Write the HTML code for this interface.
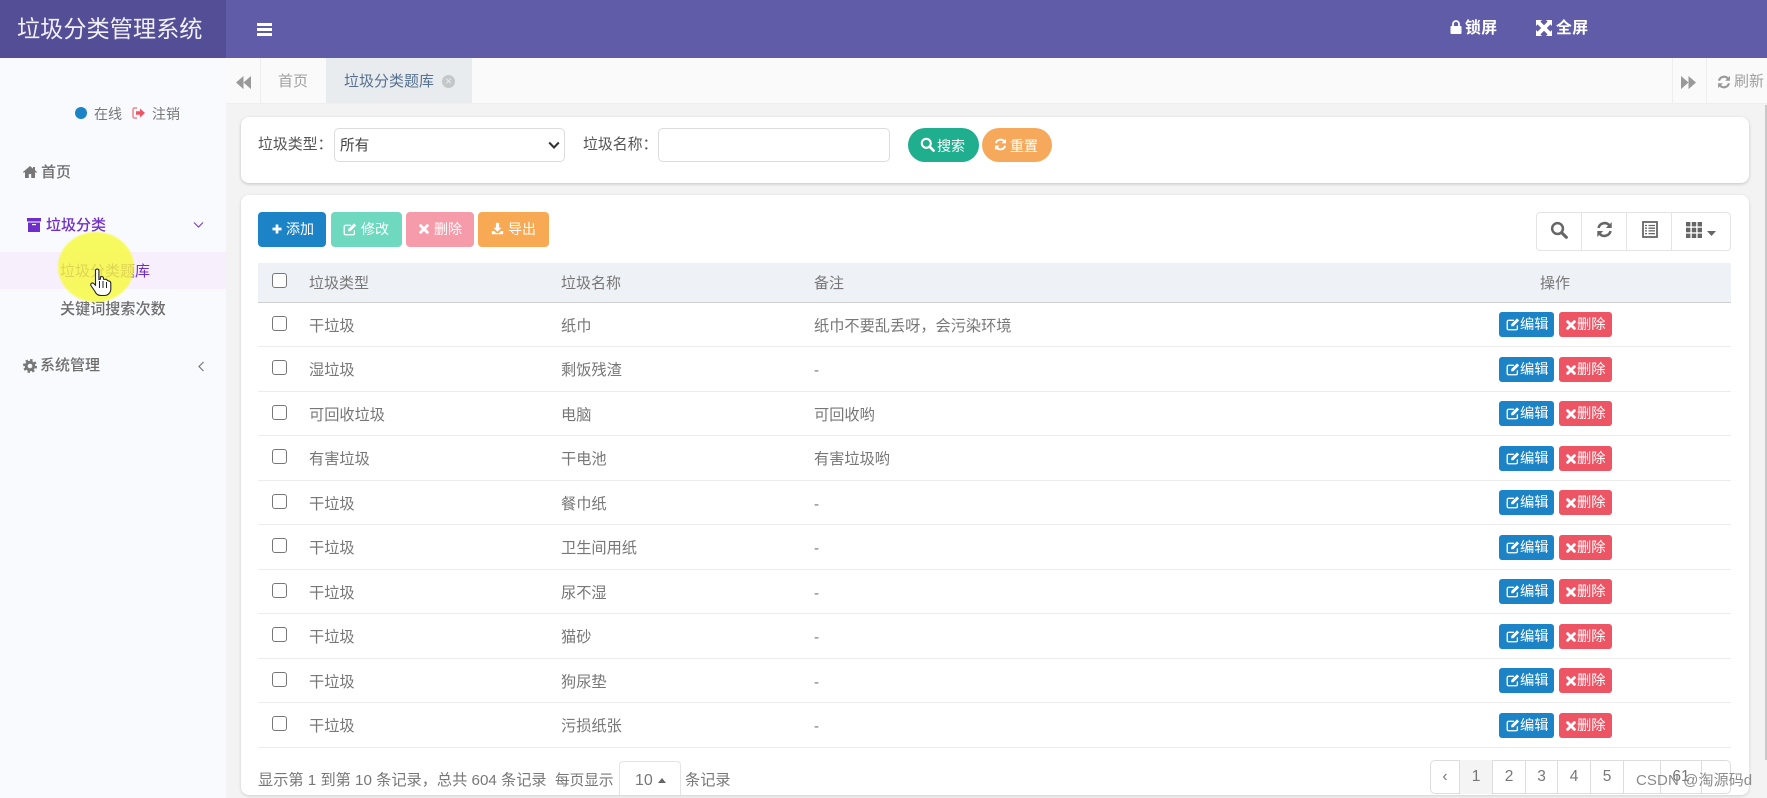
<!DOCTYPE html>
<html lang="zh"><head><meta charset="utf-8"><title>垃圾分类管理系统</title>
<style>
*{box-sizing:border-box}
html,body{margin:0;padding:0}
body{width:1767px;height:798px;overflow:hidden;position:relative;background:#f3f3f4;font-family:"Liberation Sans","Noto Sans CJK SC",sans-serif;font-size:14.65px;color:#777;filter:blur(.35px)}
.a{position:absolute;white-space:nowrap}
svg{position:absolute;display:block}
.t{line-height:20px;height:20px}
.btn{position:absolute;border-radius:4px;color:#fff;line-height:35px;height:35px;top:212px;font-size:14px}
.row{position:absolute;left:258px;width:1473px;height:44.5px;border-bottom:1px solid #ececec;line-height:47px;color:#777;font-size:15.2px}
.row span{position:absolute;top:0}
.row .c1{left:51px}.row .c2{left:303px}.row .c3{left:556px}
.row i{position:absolute;left:14px;top:13px;width:15px;height:15px;border:1px solid #777;border-radius:3px;background:#fff}
.row b{position:absolute;top:9.500px;height:25px;border-radius:3px;color:#fff;font-weight:400;font-size:14.300px;line-height:27px;text-align:left}
.row .e{left:1241px;width:55px;background:#1c84c6;padding-left:21px}
.row .d{left:1301px;width:53px;background:#ed5565;padding-left:18px}
.pg{position:absolute;top:760px;height:34px;border-right:1px solid #ddd;line-height:34px;text-align:center;color:#777;font-size:15.500px}
</style></head><body>
<svg width="0" height="0" style="position:absolute"><defs>
<symbol id="edit" viewBox="0 0 16 16"><path d="M13 9.500V13a1.600 1.600 0 0 1-1.600 1.600H3A1.600 1.600 0 0 1 1.400 13V5.400A1.600 1.600 0 0 1 3 3.800h6" fill="none" stroke="currentColor" stroke-width="1.500"/><path d="M6 8.200 12.600 1.600l2.400 2.400-6.600 6.600H6z" fill="currentColor"/></symbol>
<symbol id="x" viewBox="0 0 16 16"><path d="M3.500 3.500l9 9M12.500 3.500l-9 9" stroke="currentColor" stroke-width="3.800" stroke-linecap="round" fill="none"/></symbol>
<symbol id="plus" viewBox="0 0 16 16"><path d="M8 2v12M2 8h12" stroke="currentColor" stroke-width="3.600" fill="none"/></symbol>
<symbol id="dl" viewBox="0 0 16 16"><path d="M6 1h4v6h3l-5 5-5-5h3zM1 11h3l2 2.500h4l2-2.500h3v4H1z" fill="currentColor"/></symbol>
<symbol id="search" viewBox="0 0 16 16"><circle cx="6.700" cy="6.700" r="4.800" fill="none" stroke="currentColor" stroke-width="2.200"/><path d="M10.500 10.500l4 4" stroke="currentColor" stroke-width="2.800" stroke-linecap="round"/></symbol>
<symbol id="ref" viewBox="0 0 16 16"><path d="M2.300 6.500A6 6 0 0 1 12.400 3.800" fill="none" stroke="currentColor" stroke-width="2.400"/><path d="M14.800 1v5.600H9.200z" fill="currentColor"/><path d="M13.700 9.500A6 6 0 0 1 3.600 12.200" fill="none" stroke="currentColor" stroke-width="2.400"/><path d="M1.200 15V9.400h5.600z" fill="currentColor"/></symbol>
<symbol id="dl2" viewBox="0 0 16 16"><path d="M8 1 0 8l8 7zM16 1 8 8l8 7z" fill="currentColor"/></symbol>
<symbol id="dr2" viewBox="0 0 16 16"><path d="M0 1l8 7-8 7zM8 1l8 7-8 7z" fill="currentColor"/></symbol>
<symbol id="th" viewBox="0 0 16 16"><path d="M0 0h4.400v4.400H0zM5.800 0h4.400v4.400H5.800zM11.600 0H16v4.400h-4.400zM0 5.800h4.400v4.400H0zM5.800 5.800h4.400v4.400H5.800zM11.600 5.800H16v4.400h-4.400zM0 11.600h4.400V16H0zM5.800 11.600h4.400V16H5.800zM11.600 11.600H16V16h-4.400z" fill="currentColor"/></symbol>
</defs></svg>

<!-- header -->
<div class="a" style="left:0;top:0;width:1767px;height:58px;background:#605ca8"></div>
<div class="a" style="left:0;top:0;width:226px;height:58px;background:#544e96"></div>
<div class="a" style="left:17px;top:12px;line-height:34px;font-size:23.200px;color:#f1f0f7">垃圾分类管理系统</div>
<div class="a" style="left:257px;top:23px;width:15px;height:3px;background:#fff"></div>
<div class="a" style="left:257px;top:28px;width:15px;height:3px;background:#fff"></div>
<div class="a" style="left:257px;top:33px;width:15px;height:3px;background:#fff"></div>
<svg style="left:1450px;top:20px" width="12" height="14" viewBox="0 0 12 14"><path d="M3 6V4a3 3 0 0 1 6 0v2" fill="none" stroke="#fff" stroke-width="1.800"/><rect x="0.500" y="6" width="11" height="8" rx="1" fill="#fff"/></svg>
<div class="a t" style="left:1465px;top:19px;font-size:15.800px;font-weight:700;color:#fff;letter-spacing:.5px">锁屏</div>
<svg style="left:1536px;top:20px" width="16" height="16" viewBox="0 0 16 16"><path d="M0 0h6L4.400 1.600 8 5.200l3.600-3.600L10 0h6v6l-1.600-1.600L10.800 8l3.600 3.600L16 10v6h-6l1.600-1.600L8 10.800l-3.600 3.600L6 16H0v-6l1.600 1.600L5.200 8 1.600 4.400 0 6z" fill="#fff"/></svg>
<div class="a t" style="left:1556px;top:19px;font-size:15.800px;font-weight:700;color:#fff;letter-spacing:.5px">全屏</div>

<!-- sidebar -->
<div class="a" style="left:0;top:58px;width:226px;height:740px;background:#f9fafd"></div>
<div class="a" style="left:75px;top:107px;width:12px;height:12px;border-radius:50%;background:#1c84c6"></div>
<div class="a t" style="left:94px;top:104px;font-size:14px;color:#777">在线</div>
<svg style="left:132px;top:107px" width="13" height="12" viewBox="0 0 13 12"><path d="M5 1H2.500A1.500 1.500 0 0 0 1 2.500v7A1.500 1.500 0 0 0 2.500 11H5" fill="none" stroke="#f3838f" stroke-width="1.500"/><path d="M4 4.300h4V1.500L13 6 8 10.500V7.700H4z" fill="#ed5565"/></svg>
<div class="a t" style="left:152px;top:104px;font-size:14px;color:#777">注销</div>

<svg style="left:23px;top:166px" width="14" height="12" viewBox="0 0 14 12"><path d="M7 0 0 6l.8 1L2 6v6h3.800V8h2.400v4H12V6l1.200 1 .8-1-2-1.700V1h-2v1.600z" fill="#777"/></svg>
<div class="a t" style="left:41px;top:163px;font-size:15px;font-weight:500;color:#6d6d6d">首页</div>

<svg style="left:27px;top:218px" width="14" height="14" viewBox="0 0 14 14"><path d="M0 0h14v3.500H0zM1 4.500h12V14H1z" fill="#6f2dc9"/><rect x="5" y="6" width="4" height="1.200" fill="#f9fafd"/></svg>
<div class="a t" style="left:46px;top:216px;font-size:15px;font-weight:500;color:#6f2dc9">垃圾分类</div>
<svg style="left:193px;top:221px" width="11" height="8" viewBox="0 0 11 8"><path d="M1 1.500 5.500 6 10 1.500" fill="none" stroke="#7a45cc" stroke-width="1.200"/></svg>

<div class="a" style="left:0;top:252px;width:226px;height:37px;background:#f8effd"></div>
<div class="a t" style="left:60px;top:262px;font-size:15px;color:#6f2dc9">垃圾分类题库</div>
<div class="a t" style="left:60px;top:300px;font-size:15.100px;font-weight:500;color:#6d6d6d">关键词搜索次数</div>
<div class="a" style="left:58px;top:232px;width:76px;height:70px;border-radius:50%;background:rgba(246,250,60,.82);filter:blur(.7px)"></div>
<svg style="left:90px;top:267px" width="22" height="30" viewBox="0 0 22 30"><path d="M5.500 3a2 2 0 0 1 3.400 0v9.500l1.500-.3V10c1.500-.8 2.700-.5 3 .8l.1 1.400 1.300.2c1.200-.5 2.200 0 2.500 1l1.500.6c1.500.2 2 1.200 2 2.400v5.500c0 3.500-2.500 6.600-6.500 6.600H11c-3 0-5-1.600-6-4L.9 18.500c-.8-1.800 1.400-3.400 2.900-1.900L5.500 18.200z" fill="#fff" stroke="#222" stroke-width="1.100"/><path d="M9.500 14v7M13 14v7M16.500 15v6" stroke="#222" stroke-width="1"/></svg>

<svg style="left:23px;top:359px" width="14" height="14" viewBox="0 0 14 14"><circle cx="7" cy="7" r="3.800" fill="none" stroke="#777" stroke-width="3"/><circle cx="7" cy="7" r="6" fill="none" stroke="#777" stroke-width="2" stroke-dasharray="2.400 2.310"/></svg>
<div class="a t" style="left:40px;top:356px;font-size:15px;font-weight:500;color:#6d6d6d">系统管理</div>
<svg style="left:197px;top:361px" width="8" height="11" viewBox="0 0 8 11"><path d="M6.500 1 2 5.500 6.500 10" fill="none" stroke="#777" stroke-width="1.200"/></svg>

<!-- tabs -->
<div class="a" style="left:226px;top:58px;width:1541px;height:46px;background:#fafafa;border-bottom:1px solid #eee"></div>
<div class="a" style="left:260px;top:58px;width:1px;height:45px;background:#eee"></div>
<svg style="left:236px;top:75px;color:#999" width="15" height="15"><use href="#dl2"/></svg>
<div class="a t" style="left:278px;top:72px;color:#a0a0a0;font-size:15px">首页</div>
<div class="a" style="left:326px;top:58px;width:146px;height:45px;background:#e9ecef"></div>
<div class="a t" style="left:344px;top:72px;color:#56718f;font-size:15px">垃圾分类题库</div>
<div class="a" style="left:442px;top:75px;width:13px;height:13px;border-radius:50%;background:#c4c7ca;color:#e9ecef;font-size:12px;line-height:12px;text-align:center">×</div>
<div class="a" style="left:1672px;top:58px;width:1px;height:45px;background:#eee"></div>
<div class="a" style="left:1706px;top:58px;width:1px;height:45px;background:#eee"></div>
<svg style="left:1681px;top:75px;color:#999" width="15" height="15"><use href="#dr2"/></svg>
<svg style="left:1717px;top:75px;color:#999" width="14" height="14"><use href="#ref"/></svg>
<div class="a t" style="left:1734px;top:72px;color:#a0a0a0;font-size:15px">刷新</div>

<div class="a" style="left:1765px;top:105px;width:2px;height:655px;background:#c9c9c9"></div>

<!-- search panel -->
<div class="a" style="left:241px;top:117px;width:1508px;height:66px;background:#fff;border-radius:8px;box-shadow:0 1px 3px rgba(0,0,0,.2)"></div>
<div class="a t" style="left:258px;top:135px;color:#555;font-size:14.900px">垃圾类型：</div>
<div class="a" style="left:334px;top:128px;width:231px;height:34px;background:#fff;border:1px solid #dcdcdc;border-radius:5px"></div>
<div class="a t" style="left:340px;top:136px;color:#444">所有</div>
<svg style="left:548px;top:141px" width="12" height="9" viewBox="0 0 12 9"><path d="M1.200 1.500 6 6.500l4.800-5" fill="none" stroke="#333" stroke-width="2"/></svg>
<div class="a t" style="left:583px;top:135px;color:#555;font-size:14.900px">垃圾名称：</div>
<div class="a" style="left:658px;top:128px;width:232px;height:34px;background:#fff;border:1px solid #dcdcdc;border-radius:5px"></div>
<div class="a" style="left:908px;top:128px;width:71px;height:34px;border-radius:17px;background:#1fae8e"></div>
<svg style="left:920px;top:137px;color:#fff" width="15" height="15"><use href="#search"/></svg>
<div class="a t" style="left:937px;top:136px;color:#fff;font-size:14px">搜索</div>
<div class="a" style="left:982px;top:128px;width:70px;height:34px;border-radius:17px;background:#f7a95b"></div>
<svg style="left:994px;top:138px;color:#fff" width="13" height="13"><use href="#ref"/></svg>
<div class="a t" style="left:1010px;top:136px;color:#fff;font-size:14px">重置</div>

<!-- table panel -->
<div class="a" style="left:241px;top:195px;width:1508px;height:600px;background:#fff;border-radius:8px;box-shadow:0 1px 3px rgba(0,0,0,.15)"></div>

<div class="btn" style="left:258px;width:68px;background:#1c84c6"></div>
<svg style="left:271px;top:223px;color:#fff" width="12" height="12"><use href="#plus"/></svg>
<div class="a t" style="left:286px;top:219px;color:#fff;font-size:14px">添加</div>
<div class="btn" style="left:331px;width:71px;background:#6fd9c0"></div>
<svg style="left:343px;top:222px;color:#fff" width="14" height="14"><use href="#edit"/></svg>
<div class="a t" style="left:361px;top:219px;color:#fff;font-size:14px">修改</div>
<div class="btn" style="left:406px;width:68px;background:#f59ba9"></div>
<svg style="left:418px;top:223px;color:#fff" width="12" height="12"><use href="#x"/></svg>
<div class="a t" style="left:434px;top:219px;color:#fff;font-size:14px">删除</div>
<div class="btn" style="left:478px;width:71px;background:#f7a954"></div>
<svg style="left:491px;top:222px;color:#fff" width="13" height="13"><use href="#dl"/></svg>
<div class="a t" style="left:508px;top:219px;color:#fff;font-size:14px">导出</div>

<div class="a" style="left:1536px;top:212px;width:195px;height:39px;border:1px solid #e4e4e4;border-radius:4px;background:#fff"></div>
<div class="a" style="left:1581px;top:212px;width:1px;height:39px;background:#e4e4e4"></div>
<div class="a" style="left:1626px;top:212px;width:1px;height:39px;background:#e4e4e4"></div>
<div class="a" style="left:1671px;top:212px;width:1px;height:39px;background:#e4e4e4"></div>
<svg style="left:1550px;top:221px;color:#666" width="18" height="18"><use href="#search"/></svg>
<svg style="left:1596px;top:221px;color:#666" width="17" height="17"><use href="#ref"/></svg>
<svg style="left:1642px;top:221px" width="16" height="17" viewBox="0 0 16 17"><rect x="1" y="1" width="14" height="15" fill="none" stroke="#666" stroke-width="1.800"/><path d="M3 4.500h2M6.500 4.500H13M3 7.200h2M6.500 7.200H13M3 9.900h2M6.500 9.900H13M3 12.600h2M6.500 12.600H13" stroke="#666" stroke-width="1.300"/></svg>
<svg style="left:1686px;top:222px;color:#666" width="16" height="16"><use href="#th"/></svg>
<svg style="left:1707px;top:231px" width="9" height="5" viewBox="0 0 9 5"><path d="M0 0h9L4.500 5z" fill="#666"/></svg>

<!-- table head -->
<div class="a" style="left:258px;top:263px;width:1473px;height:40px;background:#eef1f6;border-bottom:1px solid #cfcfcf"></div>
<div class="a" style="left:272px;top:273px;width:15px;height:15px;border:1px solid #777;border-radius:3px;background:#fff"></div>
<div class="a t" style="left:309px;top:274px;font-size:15px">垃圾类型</div>
<div class="a t" style="left:561px;top:274px;font-size:15px">垃圾名称</div>
<div class="a t" style="left:814px;top:274px;font-size:15px">备注</div>
<div class="a t" style="left:1540px;top:274px;font-size:15px">操作</div>

<!-- rows -->
<div class="row" style="top:302.800px"><i></i><span class="c1">干垃圾</span><span class="c2">纸巾</span><span class="c3">纸巾不要乱丢呀，会污染环境</span><b class="e">编辑<svg style="left:7px;top:5px" width="14" height="14"><use href="#edit"/></svg></b><b class="d">删除<svg style="left:6px;top:7px" width="12" height="12"><use href="#x"/></svg></b></div>
<div class="row" style="top:347.300px"><i></i><span class="c1">湿垃圾</span><span class="c2">剩饭残渣</span><span class="c3">-</span><b class="e">编辑<svg style="left:7px;top:5px" width="14" height="14"><use href="#edit"/></svg></b><b class="d">删除<svg style="left:6px;top:7px" width="12" height="12"><use href="#x"/></svg></b></div>
<div class="row" style="top:391.800px"><i></i><span class="c1">可回收垃圾</span><span class="c2">电脑</span><span class="c3">可回收哟</span><b class="e">编辑<svg style="left:7px;top:5px" width="14" height="14"><use href="#edit"/></svg></b><b class="d">删除<svg style="left:6px;top:7px" width="12" height="12"><use href="#x"/></svg></b></div>
<div class="row" style="top:436.300px"><i></i><span class="c1">有害垃圾</span><span class="c2">干电池</span><span class="c3">有害垃圾哟</span><b class="e">编辑<svg style="left:7px;top:5px" width="14" height="14"><use href="#edit"/></svg></b><b class="d">删除<svg style="left:6px;top:7px" width="12" height="12"><use href="#x"/></svg></b></div>
<div class="row" style="top:480.800px"><i></i><span class="c1">干垃圾</span><span class="c2">餐巾纸</span><span class="c3">-</span><b class="e">编辑<svg style="left:7px;top:5px" width="14" height="14"><use href="#edit"/></svg></b><b class="d">删除<svg style="left:6px;top:7px" width="12" height="12"><use href="#x"/></svg></b></div>
<div class="row" style="top:525.300px"><i></i><span class="c1">干垃圾</span><span class="c2">卫生间用纸</span><span class="c3">-</span><b class="e">编辑<svg style="left:7px;top:5px" width="14" height="14"><use href="#edit"/></svg></b><b class="d">删除<svg style="left:6px;top:7px" width="12" height="12"><use href="#x"/></svg></b></div>
<div class="row" style="top:569.800px"><i></i><span class="c1">干垃圾</span><span class="c2">尿不湿</span><span class="c3">-</span><b class="e">编辑<svg style="left:7px;top:5px" width="14" height="14"><use href="#edit"/></svg></b><b class="d">删除<svg style="left:6px;top:7px" width="12" height="12"><use href="#x"/></svg></b></div>
<div class="row" style="top:614.300px"><i></i><span class="c1">干垃圾</span><span class="c2">猫砂</span><span class="c3">-</span><b class="e">编辑<svg style="left:7px;top:5px" width="14" height="14"><use href="#edit"/></svg></b><b class="d">删除<svg style="left:6px;top:7px" width="12" height="12"><use href="#x"/></svg></b></div>
<div class="row" style="top:658.800px"><i></i><span class="c1">干垃圾</span><span class="c2">狗尿垫</span><span class="c3">-</span><b class="e">编辑<svg style="left:7px;top:5px" width="14" height="14"><use href="#edit"/></svg></b><b class="d">删除<svg style="left:6px;top:7px" width="12" height="12"><use href="#x"/></svg></b></div>
<div class="row" style="top:703.300px"><i></i><span class="c1">干垃圾</span><span class="c2">污损纸张</span><span class="c3">-</span><b class="e">编辑<svg style="left:7px;top:5px" width="14" height="14"><use href="#edit"/></svg></b><b class="d">删除<svg style="left:6px;top:7px" width="12" height="12"><use href="#x"/></svg></b></div>

<!-- footer -->
<div class="a t" style="left:258px;top:771px;font-size:15.200px">显示第 1 到第 10 条记录，总共 604 条记录</div>
<div class="a t" style="left:555px;top:771px">每页显示</div>
<div class="a" style="left:619px;top:761px;width:62px;height:34px;border:1px solid #e4e4e4;border-bottom:0;border-radius:4px 4px 0 0;background:#fff"></div>
<div class="a t" style="left:635px;top:771px;font-size:16px">10</div>
<svg style="left:658px;top:778px" width="8" height="5" viewBox="0 0 8 5"><path d="M4 0l4 5H0z" fill="#666"/></svg>
<div class="a t" style="left:685px;top:771px;font-size:15.200px">条记录</div>

<div class="a" style="left:1430px;top:760px;width:301px;height:34px;border:1px solid #ddd;border-radius:5px;background:#fff"></div>
<div class="pg" style="left:1431px;width:29px">‹</div>
<div class="pg" style="left:1460px;width:33px;background:#f4f4f4">1</div>
<div class="pg" style="left:1493px;width:33px">2</div>
<div class="pg" style="left:1526px;width:32px">3</div>
<div class="pg" style="left:1558px;width:33px">4</div>
<div class="pg" style="left:1591px;width:33px">5</div>
<div class="pg" style="left:1624px;width:37px"></div>
<div class="pg" style="left:1661px;width:41px">61</div>
<div class="a t" style="left:1636px;top:771px;font-size:15px;color:#8a8a8a;letter-spacing:.1px">CSDN @淘源码d</div>
</body></html>
